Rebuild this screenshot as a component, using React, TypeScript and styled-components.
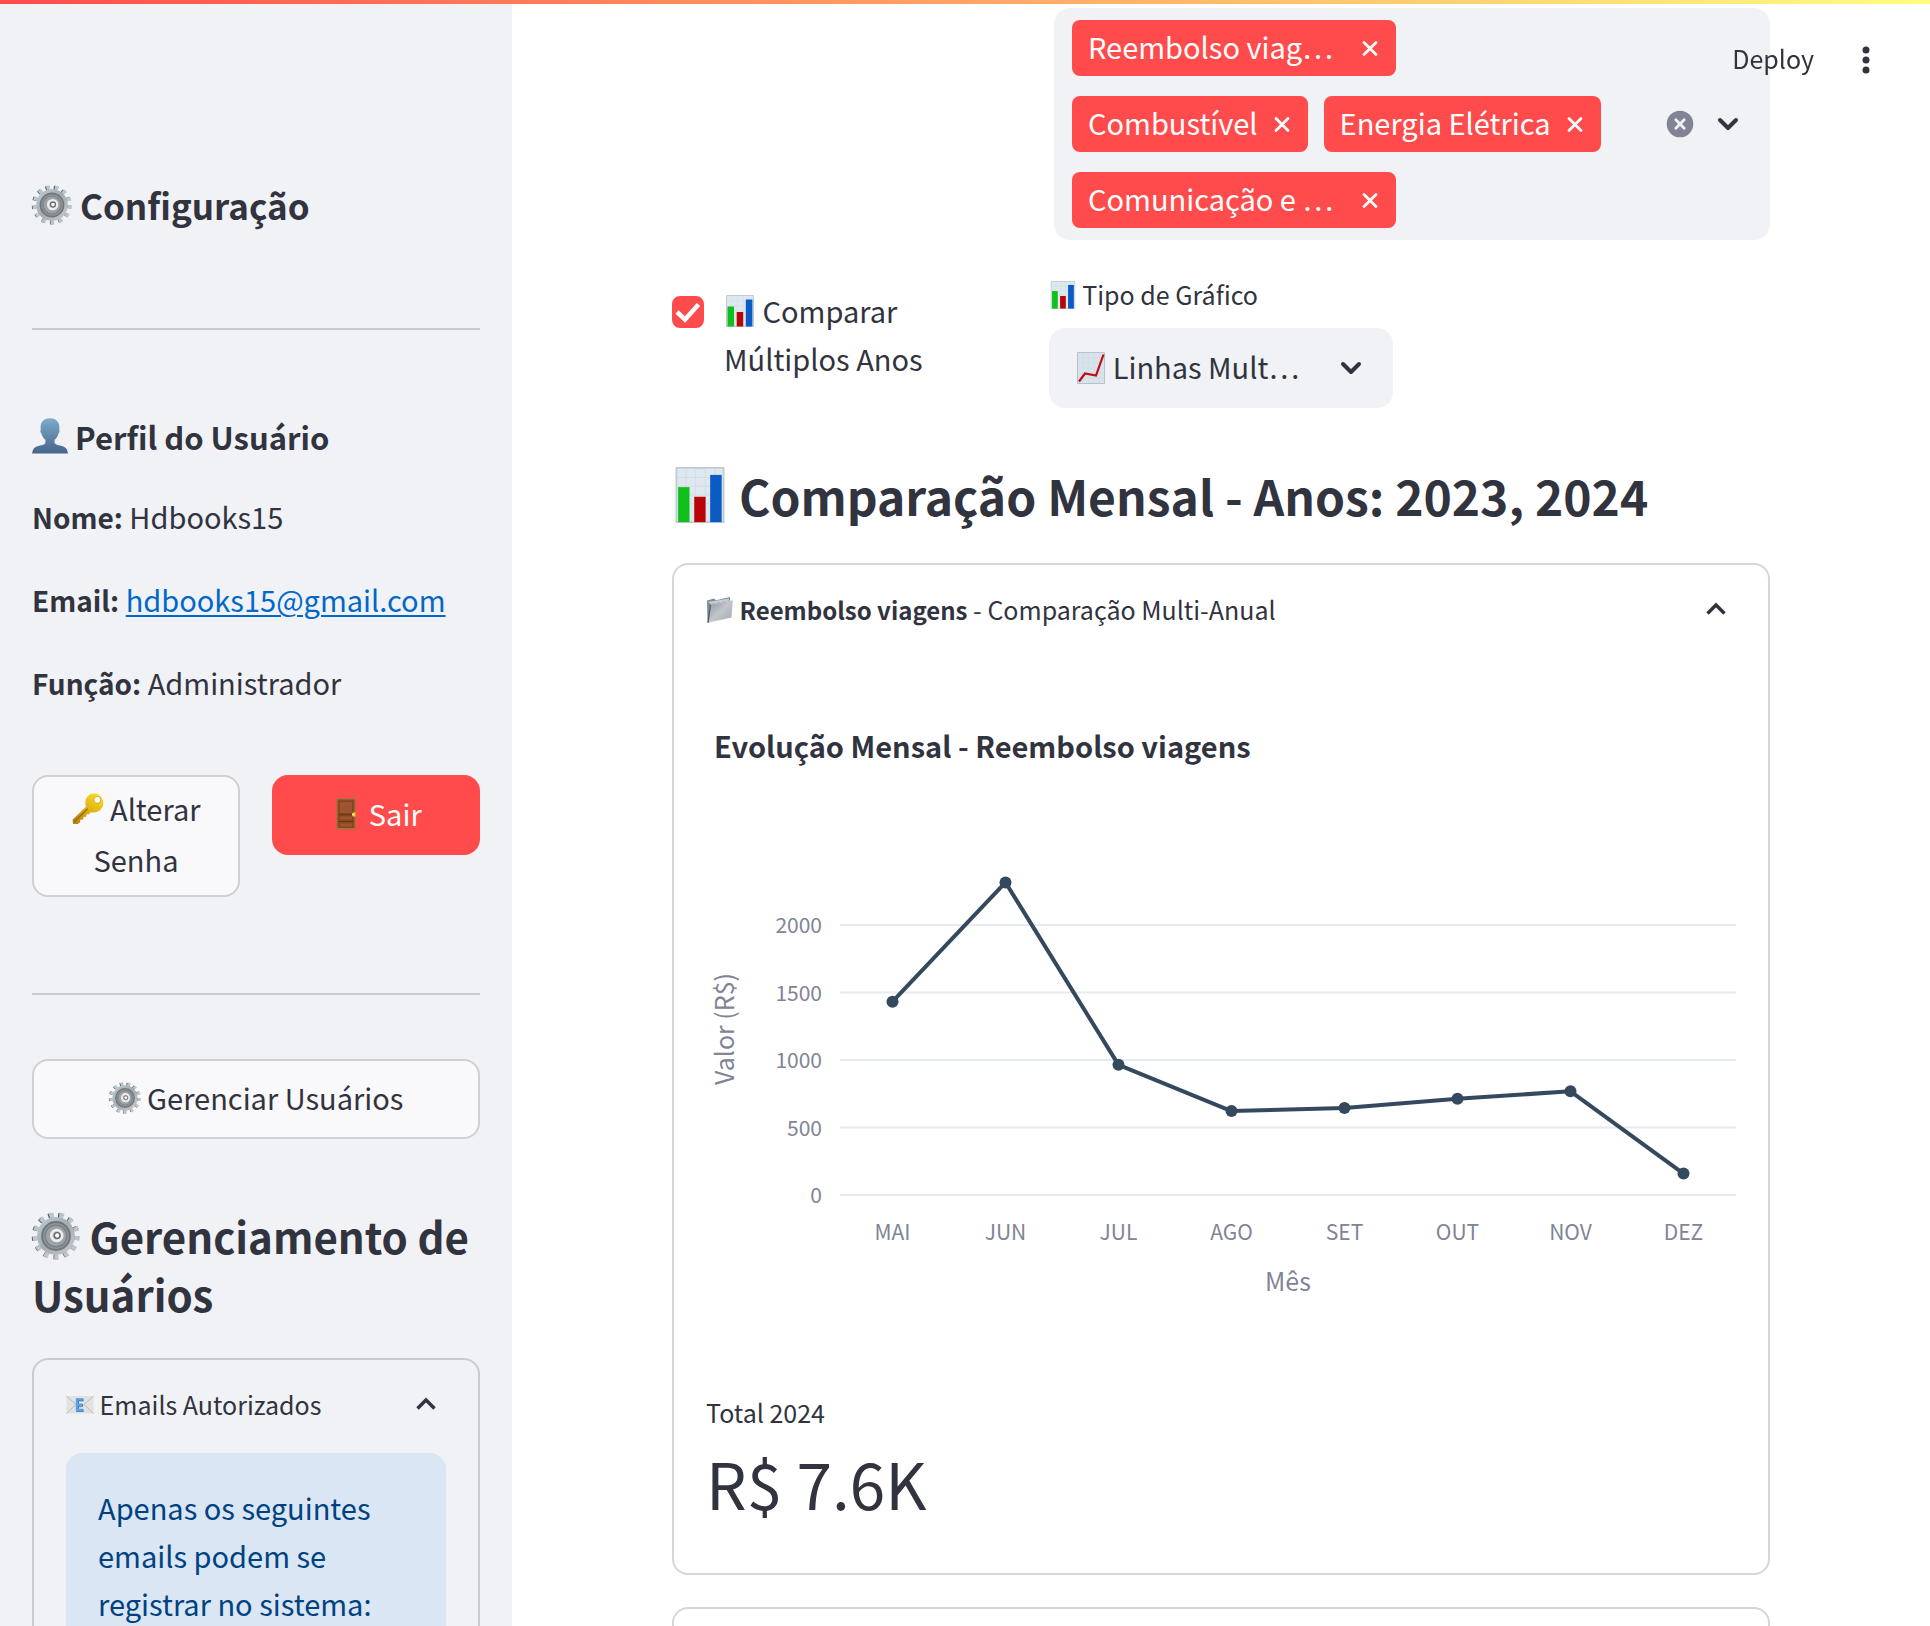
import React, { useId, useState } from "react";
import styled, { createGlobalStyle, css } from "styled-components";

const FONT = `"Noto Sans CJK KR", "Noto Sans", sans-serif`;
const ink = "#31333f";
const red = "#ff4b4b";
const surface = "#f0f2f6";
const line = "rgba(49, 51, 63, 0.2)";

const GlobalStyle = createGlobalStyle`
  *, *::before, *::after { box-sizing: border-box; }
  body { margin: 0; background: #fff; color: ${ink}; font-family: ${FONT}; font-size: 29px; }
  h1, h2, h3, h4, p { margin: 0; font-weight: inherit; }
  button, select, input { font: inherit; color: inherit; margin: 0; }
  button { cursor: pointer; }
  strong { line-height: 1; }
`;

/* ---------- layout ---------- */

const Shell = styled.div`
  display: grid;
  grid-template-columns: 512px minmax(0, 1fr);
  height: 100vh;
  overflow: hidden;
`;

const Decoration = styled.div`
  position: fixed;
  inset: 0 0 auto 0;
  height: 4px;
  z-index: 3;
  background: linear-gradient(90deg, ${red}, #fffd80);
`;

const Sidebar = styled.aside`
  background: ${surface};
  padding: 181px 32px 0;
  overflow-y: auto;
  scrollbar-width: none;
`;

const Main = styled.main`
  padding: 8px 160px 0;
  overflow-y: auto;
  scrollbar-width: none;
`;

const Toolbar = styled.header`
  position: fixed;
  top: 0;
  right: 44px;
  height: 120px;
  display: flex;
  align-items: center;
  gap: 32px;
  z-index: 2;
`;

const ToolbarButton = styled.button`
  display: flex;
  border: 0;
  padding: 0 0 4px;
  background: none;
  font-size: 25px;
  line-height: 40px;
`;

const MenuButton = styled.button`
  display: flex;
  border: 0;
  padding: 0;
  background: none;
`;

/* ---------- text ---------- */

const Glyph = styled.svg<{ $size: number }>`
  width: ${(p) => p.$size}px;
  height: ${(p) => p.$size}px;
  flex: none;
  display: inline-block;
  vertical-align: -0.14em;
  overflow: visible;
`;

const SideTitle = styled.h2`
  font-size: 35px;
  line-height: 48px;
  font-weight: 700;
`;

const SideSubtitle = styled.h4`
  font-size: 31px;
  line-height: 44px;
  font-weight: 700;
`;

const SideHeading = styled.h1`
  margin-top: 68px;
  font-size: 42px;
  line-height: 58px;
  font-weight: 700;
`;

const MainHeading = styled.h2`
  margin: 53px 0 34px;
  font-size: 48px;
  line-height: 68px;
  font-weight: 700;
`;

const Rule = styled.hr<{ $top: number; $bottom: number }>`
  border: 0;
  height: 2px;
  background: #cacbd1;
  margin: ${(p) => p.$top}px 0 ${(p) => p.$bottom}px;
`;

const Facts = styled.div`
  display: flex;
  flex-direction: column;
  gap: 32px;
  margin: 32px 0 67px;
  line-height: 51px;

  strong {
    font-size: 28px;
  }
`;

const MailLink = styled.a`
  color: #0068c9;
  text-decoration: underline;
  text-decoration-thickness: 2px;
  text-underline-offset: 3px;
`;

/* ---------- controls ---------- */

const ButtonRow = styled.div`
  display: grid;
  grid-template-columns: 1fr 1fr;
  align-items: start;
  gap: 32px;
`;

const Button = styled.button<{ $primary?: boolean }>`
  width: 100%;
  min-height: 80px;
  padding: 6px 24px 10px;
  border: 2px solid ${line};
  border-radius: 16px;
  background: #f9f9fb;
  line-height: 51px;
  ${(p) =>
    p.$primary &&
    css`
      background: ${red};
      border-color: ${red};
      color: #fff;
    `}
`;

const FilterRow = styled.div`
  display: grid;
  grid-template-columns: 350fr 716fr;
  gap: 32px;
`;

const OptionRow = styled.div`
  display: grid;
  grid-template-columns: repeat(3, 1fr);
  gap: 32px;
  margin-top: 32px;
`;

const MultiSelect = styled.div`
  grid-column: 2;
  display: flex;
  align-items: center;
  padding: 12px 26px 12px 18px;
  border-radius: 16px;
  background: ${surface};
`;

const Tags = styled.ul`
  flex: 1;
  display: flex;
  flex-wrap: wrap;
  gap: 20px 16px;
  margin: 0 24px 0 0;
  padding: 0;
  list-style: none;
`;

const Tag = styled.li<{ $clipped?: boolean }>`
  display: flex;
  align-items: center;
  justify-content: space-between;
  gap: 14px;
  width: ${(p) => (p.$clipped ? "324px" : "auto")};
  height: 56px;
  padding: 0 16px;
  border-radius: 8px;
  background: ${red};
  color: #fff;
  white-space: nowrap;
`;

const TagText = styled.span`
  padding-bottom: 4px;
`;

const IconButton = styled.button<{ $size: number }>`
  display: grid;
  place-items: center;
  width: ${(p) => p.$size}px;
  height: ${(p) => p.$size}px;
  padding: 0;
  border: 0;
  background: none;
`;

const MultiActions = styled.div`
  display: flex;
  gap: 16px;
`;

const CheckLabel = styled.label`
  display: flex;
  align-items: flex-start;
  gap: 20px;
  padding-top: 14px;
  line-height: 48px;
`;

const CheckBox = styled.span`
  display: grid;
  flex: none;
  margin-top: 10px;

  > * {
    grid-area: 1 / 1;
  }

  input {
    appearance: none;
    width: 32px;
    height: 32px;
    border: 2px solid ${line};
    border-radius: 8px;
  }

  input:checked {
    border-color: ${red};
    background: ${red};
  }

  svg {
    pointer-events: none;
  }
`;

const FieldLabel = styled.label`
  display: block;
  margin-bottom: 12px;
  font-size: 25px;
  line-height: 44px;
`;

const SelectBox = styled.div`
  display: grid;
  grid-template-columns: 26px 32px 1fr 32px 26px;
  align-items: center;
  height: 80px;
  border-radius: 16px;
  background: ${surface};
`;

const Select = styled.select`
  grid-area: 1 / 1 / 2 / -1;
  width: 100%;
  height: 80px;
  padding: 0 64px 4px;
  border: 0;
  border-radius: 16px;
  appearance: none;
  background: none;
`;

const SelectIcon = styled.span<{ $column: number }>`
  display: flex;
  grid-row: 1;
  grid-column: ${(p) => p.$column};
  pointer-events: none;
`;

/* ---------- cards ---------- */

const Expander = styled.details`
  border: 2px solid ${line};
  border-radius: 16px;
`;

const Summary = styled.summary`
  display: flex;
  align-items: center;
  justify-content: space-between;
  padding: 24px 40px 24px 32px;
  font-size: 25px;
  line-height: 40px;
  list-style: none;
  cursor: pointer;

  strong {
    font-size: 24px;
  }
`;

const ExpanderBody = styled.div<{ $bottom: number }>`
  padding: 0 32px ${(p) => p.$bottom}px;
`;

const EmailExpander = styled(Expander)`
  margin-top: 35px;
`;

const Notice = styled.div`
  margin-top: 5px;
  padding: 30px 32px;
  border-radius: 16px;
  background: #dae6f4;
  color: #004280;
  line-height: 48px;
`;

const NextPanel = styled.section`
  min-height: 92px;
  margin-top: 32px;
  border: 2px solid ${line};
  border-radius: 16px;
`;

const Chart = styled.svg`
  display: block;
  width: 100%;
  height: auto;

  text {
    font-family: ${FONT};
    fill: #808495;
  }
`;

const ChartTitle = styled.text`
  && {
    fill: ${ink};
  }
  font-size: 29px;
  font-weight: 700;
`;

const MetricLabel = styled.div`
  font-size: 25px;
  line-height: 44px;
`;

const MetricValue = styled.div`
  font-size: 64px;
  line-height: 96px;
`;

/* ---------- emoji drawings ---------- */

type SizeProps = { size?: number };

const Gear = ({ size = 32 }: SizeProps) => {
  const id = useId();
  const teeth = 13;
  const tooth = (r: number) => (2 * Math.PI * r) / teeth;
  return (
    <Glyph $size={size} viewBox="0 0 40 40" aria-hidden="true">
      <defs>
        <linearGradient id={id} x1="0" y1="0" x2="1" y2="1">
          <stop offset="0" stopColor="#b9ccd8" />
          <stop offset="0.5" stopColor="#a7abaf" />
          <stop offset="1" stopColor="#cfcdd0" />
        </linearGradient>
      </defs>
      <circle cx="19.2" cy="20" r="17.4" fill="none" stroke="#5c5049" strokeWidth="4"
        strokeDasharray={`3.2 ${tooth(17.4) - 3.2}`} />
      <circle cx="20.2" cy="20" r="17.6" fill="none" stroke="#b9c6cf" strokeWidth="4.2"
        strokeDasharray={`3.7 ${tooth(17.6) - 3.7}`} />
      <circle cx="20" cy="20" r="15.8" fill={`url(#${id})`} />
      <circle cx="20" cy="20" r="11.6" fill="#8f9499" stroke="#70777c" strokeWidth="1.6" />
      <circle cx="20" cy="20" r="9" fill="#9ea3a7" stroke="#7c8286" strokeWidth="1.2" />
      <circle cx="20.6" cy="19.6" r="4.6" fill="#b9bdc4" stroke="#eceff4" strokeWidth="2.2" />
      <circle cx="21" cy="19.6" r="2.4" fill="#fff" stroke="#6d665c" strokeWidth="1.2" />
    </Glyph>
  );
};

const Person = ({ size = 32 }: SizeProps) => {
  const id = useId();
  return (
    <Glyph $size={size} viewBox="0 0 36 36" aria-hidden="true">
      <defs>
        <linearGradient id={id} x1="0" y1="0" x2="0" y2="1">
          <stop offset="0" stopColor="#7fabcb" />
          <stop offset="1" stopColor="#456489" />
        </linearGradient>
      </defs>
      <path
        d="M18 .3c5.600 0 9.400 3.400 9.400 8.900 0 .9 0 1.800-.2 2.800.7.5.5 2.600-.6 3.300-.7 3-2 4.700-4 6.500v3.100c.7 1.500 3.200 2.100 6.400 2.900C33.500 28.900 35.600 31 36 35.600H.2C.6 31 2.500 28.900 7 27.800c3.200-.8 5.700-1.400 6.400-2.900v-3.100c-2-1.800-3.300-3.500-4-6.500-1.100-.7-1.300-2.800-.6-3.300-.2-1-.2-1.900-.2-2.800C8.600 3.700 12.400.3 18 .3z"
        fill={`url(#${id})`}
      />
    </Glyph>
  );
};

const KeyIcon = ({ size = 32 }: SizeProps) => {
  const id = useId();
  return (
    <Glyph $size={size} viewBox="0 0 32 32" aria-hidden="true">
      <defs>
        <linearGradient id={id} x1="0.8" y1="0" x2="0.2" y2="1">
          <stop offset="0" stopColor="#fbdc1f" />
          <stop offset="0.55" stopColor="#dcae14" />
          <stop offset="1" stopColor="#b98410" />
        </linearGradient>
      </defs>
      <path
        d="M22 .5a9.500 9.500 0 0 1 3.500 18.300c-2.500 1-5 1-7 .4l-1.500 2h-2.500l-.3 2.600-2.700.2-.4 2.600-2.800.1-.2 2.500L5.600 31H1.200L.5 26.800 14 13.500C11.500 6.500 16 .5 22 .5z"
        fill={`url(#${id})`}
      />
      <path d="M2 29 15.500 15.800" stroke="#96690b" strokeWidth="1.300" />
      <circle cx="25.300" cy="6.800" r="3.500" fill="#fff" stroke="#c59a10" strokeWidth="0.800" />
    </Glyph>
  );
};

const Door = ({ size = 32 }: SizeProps) => (
  <Glyph $size={size} viewBox="0 0 32 32" aria-hidden="true">
    <path d="M6 0h20v32H6z" fill="#b56b3c" />
    <path d="M7.500 1.500h17V30h-17z" fill="#8f4a26" />
    <path d="M9.500 3.500h13v12h-13zM9.500 18h13v4h-13zM9.500 25h13v4h-13z" fill="#9c552f" stroke="#7d4120" strokeWidth="0.800" />
    <path d="M8 16.700h16M8 23.500h16" stroke="#6c3416" strokeWidth="1" />
    <path d="M22.500 14.500h3v4h-3z" fill="#f2c62c" />
    <circle cx="23" cy="16.500" r="1.100" fill="#fff2a0" />
  </Glyph>
);

const Bars = ({ size = 32 }: SizeProps) => (
  <Glyph $size={size} viewBox="0 0 32 32" aria-hidden="true">
    <path d="M2.500.5h27v31h-27z" fill="#dfe8ef" stroke="#bccad5" />
    <path d="M2.500 6h27M2.500 11h27M2.500 16h27M2.500 21h27M8 .5v31M13.500.5v31M19 .5v31M24.500.5v31" stroke="#cdd9e2" strokeWidth="0.400" />
    <path d="M3.500 11.500H10V31.500H3.500z" fill="#0fbf1a" />
    <path d="M12.700 17h6.500v14.500h-6.500z" fill="#b90508" />
    <path d="M21.800 4.500h6.600v27h-6.600z" fill="#0a5cc4" />
  </Glyph>
);

const Trend = ({ size = 32 }: SizeProps) => (
  <Glyph $size={size} viewBox="0 0 32 32" aria-hidden="true">
    <path d="M2.500.5h27v31h-27z" fill="#d9e3eb" stroke="#b4c2cd" />
    <path d="M2.500 6h27M2.500 11h27M2.500 16h27M2.500 21h27M2.500 26h27M8 .5v31M13.500.5v31M19 .5v31M24.500.5v31" stroke="#cbd7e0" strokeWidth="0.400" />
    <path d="M4 29.500 10 21.500 21 23.500 28.500 2.500" fill="none" stroke="#c30a10" strokeWidth="2.200" />
  </Glyph>
);

const FolderIcon = ({ size = 28 }: SizeProps) => {
  const id = useId();
  return (
    <Glyph $size={size} viewBox="0 0 28 28" aria-hidden="true">
      <defs>
        <linearGradient id={id} x1="0" y1="0" x2="1" y2="1">
          <stop offset="0" stopColor="#8a929a" />
          <stop offset="0.500" stopColor="#c2c6cb" />
          <stop offset="1" stopColor="#a4a9af" />
        </linearGradient>
      </defs>
      <path d="M1 4.500 8 2.500l2 1.800L24 1v3.500L4 8.500 3 26H1.500z" fill="#7e8c98" />
      <path d="M1.500 6 23 2.500v2L5 8z" fill="#c4d0d8" />
      <path d="M4.500 8.600 26.800 4.300 25.500 21.500 2 26.800z" fill={`url(#${id})`} />
      <path d="M4.500 8.600 2 26.800" stroke="#525d67" strokeWidth="1.300" />
    </Glyph>
  );
};

const Envelope = ({ size = 28 }: SizeProps) => (
  <Glyph $size={size} viewBox="0 0 28 28" aria-hidden="true">
    <path d="M.5 5h27v17.500H.5z" fill="#e0e1e1" />
    <path d="M.5 5 12 15.500q2 1.500 4 0L27.500 5M.5 22.500 10 13.500M27.500 22.500 18 13.500" fill="none" stroke="#b9baba" strokeWidth="0.900" />
    <path d="M17.500 9h-6v10.500h6M11.500 14.200h5.400" fill="none" stroke="#31567d" strokeWidth="2.600" />
    <path d="M17 8.500h-6V19h6M11 13.700h5.400" fill="none" stroke="#56a3f0" strokeWidth="2.400" />
  </Glyph>
);

/* ---------- line icons ---------- */

const ChevronUp = () => (
  <svg width="24" height="24" viewBox="0 0 24 24" fill="none" aria-hidden="true">
    <path d="M3.500 16.500 12 8l8.500 8.500" stroke={ink} strokeWidth="3.400" />
  </svg>
);

const ChevronDown = () => (
  <svg width="32" height="32" viewBox="0 0 32 32" fill="none" aria-hidden="true">
    <path d="m8 12 8 8 8-8" stroke={ink} strokeWidth="4" strokeLinecap="round" strokeLinejoin="round" />
  </svg>
);

const Cross = () => (
  <svg width="20" height="20" viewBox="0 0 20 20" fill="none" aria-hidden="true">
    <path d="m4 4.500 12 12m0-12-12 12" stroke="#fff" strokeWidth="2.800" strokeLinecap="round" />
  </svg>
);

const ClearIcon = () => (
  <svg width="28" height="28" viewBox="0 0 28 28" fill="none" aria-hidden="true">
    <circle cx="14" cy="14" r="13.300" fill="#808495" />
    <path d="m9.800 9.800 8.400 8.400m0-8.400-8.400 8.400" stroke={surface} strokeWidth="2.800" strokeLinecap="round" />
  </svg>
);

const Dots = () => (
  <svg width="40" height="40" viewBox="0 0 40 40" fill={ink} aria-hidden="true">
    <circle cx="20" cy="10" r="3.500" />
    <circle cx="20" cy="20" r="3.500" />
    <circle cx="20" cy="30" r="3.500" />
  </svg>
);

/* ---------- chart ---------- */

const months = [
  { name: "MAI", value: 1432 },
  { name: "JUN", value: 2315 },
  { name: "JUL", value: 964 },
  { name: "AGO", value: 622 },
  { name: "SET", value: 644 },
  { name: "OUT", value: 713 },
  { name: "NOV", value: 768 },
  { name: "DEZ", value: 159 },
];
const ticks = [0, 500, 1000, 1500, 2000];
const plot = { left: 134, right: 1030, base: 542, unit: 0.135, first: 186.5, step: 113 };
const px = (i: number) => plot.first + i * plot.step;
const py = (v: number) => plot.base - v * plot.unit;

const MonthlyChart = () => (
  <Chart viewBox="0 0 1030 737" role="img" aria-label="Evolução Mensal - Reembolso viagens">
    <ChartTitle x="8" y="105">Evolução Mensal - Reembolso viagens</ChartTitle>
    {ticks.map((t) => (
      <g key={t}>
        <line x1={plot.left} x2={plot.right} y1={py(t)} y2={py(t)} stroke="#e6eaf1" strokeWidth="2" />
        <text x="116" y={py(t) + 8} fontSize="21" textAnchor="end">{t}</text>
      </g>
    ))}
    <polyline
      points={months.map((m, i) => `${px(i)},${py(m.value)}`).join(" ")}
      fill="none"
      stroke="#34495e"
      strokeWidth="4"
      strokeLinejoin="round"
    />
    {months.map((m, i) => (
      <g key={m.name}>
        <circle cx={px(i)} cy={py(m.value)} r="6" fill="#34495e" />
        <text x={px(i)} y="587" fontSize="21" textAnchor="middle">{m.name}</text>
      </g>
    ))}
    <text x="582" y="638" fontSize="25" textAnchor="middle">Mês</text>
    <text transform="translate(28 376) rotate(-90)" fontSize="25" textAnchor="middle">Valor (R$)</text>
  </Chart>
);

/* ---------- page ---------- */

const categories = [
  { name: "Reembolso viag…", clipped: true },
  { name: "Combustível" },
  { name: "Energia Elétrica" },
  { name: "Comunicação e …", clipped: true },
];

export default function App() {
  const [compare, setCompare] = useState(true);

  return (
    <>
      <GlobalStyle />
      <Decoration />
      <Toolbar>
        <ToolbarButton type="button">Deploy</ToolbarButton>
        <MenuButton type="button" aria-label="Menu">
          <Dots />
        </MenuButton>
      </Toolbar>
      <Shell>
        <Sidebar>
          <SideTitle><Gear size={40} /> Configuração</SideTitle>
          <Rule $top={99} $bottom={85} />
          <SideSubtitle><Person size={36} /> Perfil do Usuário</SideSubtitle>
          <Facts>
            <p><strong>Nome:</strong> Hdbooks15</p>
            <p>
              <strong>Email:</strong> <MailLink href="mailto:hdbooks15@gmail.com">hdbooks15@gmail.com</MailLink>
            </p>
            <p><strong>Função:</strong> Administrador</p>
          </Facts>
          <ButtonRow>
            <Button type="button"><KeyIcon /> Alterar Senha</Button>
            <Button type="button" $primary><Door /> Sair</Button>
          </ButtonRow>
          <Rule $top={96} $bottom={64} />
          <Button type="button"><Gear /> Gerenciar Usuários</Button>
          <SideHeading><Gear size={48} /> Gerenciamento de Usuários</SideHeading>
          <EmailExpander open>
            <Summary>
              <span><Envelope /> Emails Autorizados</span>
              <ChevronUp />
            </Summary>
            <ExpanderBody $bottom={32}>
              <Notice>Apenas os seguintes emails podem se registrar no sistema:</Notice>
            </ExpanderBody>
          </EmailExpander>
        </Sidebar>

        <Main>
          <FilterRow>
            <MultiSelect>
              <Tags>
                {categories.map((c) => (
                  <Tag key={c.name} $clipped={c.clipped}>
                    <TagText>{c.name}</TagText>
                    <IconButton type="button" $size={20} aria-label="Remover"><Cross /></IconButton>
                  </Tag>
                ))}
              </Tags>
              <MultiActions>
                <IconButton type="button" $size={32} aria-label="Limpar"><ClearIcon /></IconButton>
                <IconButton type="button" $size={32} aria-label="Abrir"><ChevronDown /></IconButton>
              </MultiActions>
            </MultiSelect>
          </FilterRow>

          <OptionRow>
            <CheckLabel>
              <CheckBox>
                <input type="checkbox" checked={compare} onChange={(e) => setCompare(e.target.checked)} />
                {compare && (
                  <svg width="32" height="32" viewBox="0 0 32 32" fill="none" aria-hidden="true">
                    <path d="m5 16 8 7.500L26.500 8.500" stroke="#fff" strokeWidth="4.500" />
                  </svg>
                )}
              </CheckBox>
              <span><Bars /> Comparar Múltiplos Anos</span>
            </CheckLabel>
            <div>
              <FieldLabel htmlFor="chart-type"><Bars size={28} /> Tipo de Gráfico</FieldLabel>
              <SelectBox>
                <Select id="chart-type" defaultValue="lines">
                  <option value="lines">Linhas Mult…</option>
                </Select>
                <SelectIcon $column={2}><Trend /></SelectIcon>
                <SelectIcon $column={4}><ChevronDown /></SelectIcon>
              </SelectBox>
            </div>
          </OptionRow>

          <MainHeading><Bars size={56} /> Comparação Mensal - Anos: 2023, 2024</MainHeading>

          <Expander open>
            <Summary>
              <span><FolderIcon /> <strong>Reembolso viagens</strong> - Comparação Multi-Anual</span>
              <ChevronUp />
            </Summary>
            <ExpanderBody $bottom={43}>
              <MonthlyChart />
              <MetricLabel>Total 2024</MetricLabel>
              <MetricValue>R$ 7.6K</MetricValue>
            </ExpanderBody>
          </Expander>
          <NextPanel />
        </Main>
      </Shell>
    </>
  );
}
